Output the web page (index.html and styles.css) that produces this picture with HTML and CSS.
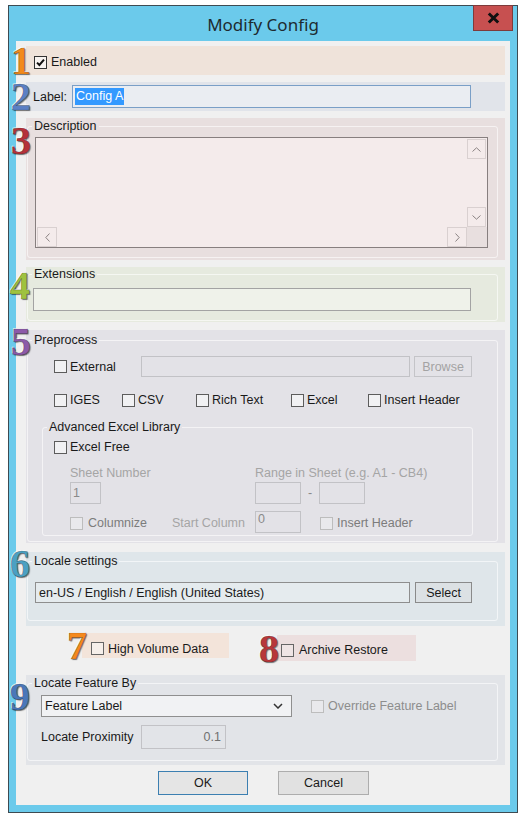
FILE: index.html
```html
<!DOCTYPE html>
<html lang="en">
<head>
    <meta charset="UTF-8">
    <meta name="viewport" content="width=device-width, initial-scale=1.0">
    <title>Modify Config</title>
    <link rel="stylesheet" href="styles.css">
</head>
<body>

<div class="window">

    <!-- Title Bar -->
    <div class="titlebar">
        <span class="title">Modify Config</span>
        <button class="close-btn">
            <svg width="13" height="12" viewBox="0 0 13 12"><path d="M1.8 1.5 L11.2 10.5 M11.2 1.5 L1.8 10.5" stroke="#111" stroke-width="3" fill="none"/></svg>
        </button>
    </div>

    <div class="client">

        <!-- 1: Enabled -->
        <div class="band band-enabled">
            <span class="num num-1">1</span>
            <label class="check">
                <span class="cb"><svg width="9" height="9" viewBox="0 0 9 9"><path d="M1 4.6 L3.4 7 L8 1.6" stroke="#111" stroke-width="2" fill="none"/></svg></span>
                Enabled
            </label>
        </div>

        <!-- 2: Label -->
        <div class="band band-label">
            <span class="num num-2">2</span>
            <span class="label-text">Label:</span>
            <div class="textbox textbox-focus"><span class="selected">Config A</span></div>
        </div>

        <!-- 3: Description -->
        <div class="band band-desc">
            <span class="num num-3">3</span>
            <fieldset class="group group-desc">
                <legend>Description</legend>
                <div class="memo">
                    <div class="memo-text"></div>
                    <div class="vscroll">
                        <span class="sb-btn"><svg width="9" height="5" viewBox="0 0 9 5"><path d="M0.5 4.5 L4.5 0.8 L8.5 4.5" stroke="#8a8282" fill="none"/></svg></span>
                        <span class="sb-track"></span>
                        <span class="sb-btn"><svg width="9" height="5" viewBox="0 0 9 5"><path d="M0.5 0.5 L4.5 4.2 L8.5 0.5" stroke="#8a8282" fill="none"/></svg></span>
                    </div>
                    <div class="hscroll">
                        <span class="sb-btn"><svg width="5" height="9" viewBox="0 0 5 9"><path d="M4.5 0.5 L0.8 4.5 L4.5 8.5" stroke="#8a8282" fill="none"/></svg></span>
                        <span class="sb-track"></span>
                        <span class="sb-btn"><svg width="5" height="9" viewBox="0 0 5 9"><path d="M0.5 0.5 L4.2 4.5 L0.5 8.5" stroke="#8a8282" fill="none"/></svg></span>
                    </div>
                    <div class="sb-corner"></div>
                </div>
            </fieldset>
        </div>

        <!-- 4: Extensions -->
        <div class="band band-ext">
            <span class="num num-4">4</span>
            <fieldset class="group group-ext">
                <legend>Extensions</legend>
                <div class="textbox ext-input"></div>
            </fieldset>
        </div>

        <!-- 5: Preprocess -->
        <div class="band band-pre">
            <span class="num num-5">5</span>
            <fieldset class="group group-pre">
                <legend>Preprocess</legend>

                <div class="row row-external">
                    <label class="check external-check"><span class="cb"></span>External</label>
                    <div class="textbox disabled-box external-path"></div>
                    <button class="btn btn-disabled browse-btn">Browse</button>
                </div>

                <div class="row row-types">
                    <label class="check"><span class="cb"></span>IGES</label>
                    <label class="check"><span class="cb"></span>CSV</label>
                    <label class="check"><span class="cb"></span>Rich Text</label>
                    <label class="check"><span class="cb"></span>Excel</label>
                    <label class="check"><span class="cb"></span>Insert Header</label>
                </div>

                <fieldset class="group group-excel">
                    <legend>Advanced Excel Library</legend>

                    <div class="row row-excel-free">
                        <label class="check"><span class="cb"></span>Excel Free</label>
                    </div>

                    <div class="row row-sheet-labels">
                        <span class="dim col-sheet">Sheet Number</span>
                        <span class="dim">Range in Sheet (e.g. A1 - CB4)</span>
                    </div>

                    <div class="row row-sheet-inputs">
                        <div class="col-sheet"><div class="textbox disabled-box small-input">1</div></div>
                        <div class="textbox disabled-box range-input"></div>
                        <span class="range-dash">-</span>
                        <div class="textbox disabled-box range-input"></div>
                    </div>

                    <div class="row row-columnize">
                        <label class="check check-disabled col-columnize"><span class="cb"></span>Columnize</label>
                        <span class="dim col-start">Start Column</span>
                        <div class="textbox disabled-box range-input">0</div>
                        <label class="check check-disabled insert-header-dim"><span class="cb"></span>Insert Header</label>
                    </div>
                </fieldset>
            </fieldset>
        </div>

        <!-- 6: Locale settings -->
        <div class="band band-locale">
            <span class="num num-6">6</span>
            <fieldset class="group group-locale">
                <legend>Locale settings</legend>
                <div class="row row-locale">
                    <div class="textbox locale-box">en-US / English / English (United States)</div>
                    <button class="btn select-btn">Select</button>
                </div>
            </fieldset>
        </div>

        <!-- 7 / 8: flags -->
        <div class="flags">
            <div class="flag flag-volume">
                <span class="num num-7">7</span>
                <label class="check"><span class="cb cb-light"></span>High Volume Data</label>
            </div>
            <div class="flag flag-archive">
                <span class="num num-8">8</span>
                <label class="check"><span class="cb cb-light"></span>Archive Restore</label>
            </div>
        </div>

        <!-- 9: Locate Feature By -->
        <div class="band band-locate">
            <span class="num num-9">9</span>
            <fieldset class="group group-locate">
                <legend>Locate Feature By</legend>
                <div class="row row-dropdown">
                    <div class="dropdown">
                        <span>Feature Label</span>
                        <svg width="10" height="6" viewBox="0 0 10 6"><path d="M1 1 L5 5 L9 1" stroke="#333" stroke-width="1.5" fill="none"/></svg>
                    </div>
                    <label class="check check-disabled override-check"><span class="cb"></span>Override Feature Label</label>
                </div>
                <div class="row row-proximity">
                    <span class="proximity-label">Locate Proximity</span>
                    <div class="textbox disabled-box proximity-input">0.1</div>
                </div>
            </fieldset>
        </div>

        <!-- Dialog buttons -->
        <div class="actions">
            <button class="btn dialog-btn default-btn">OK</button>
            <button class="btn dialog-btn">Cancel</button>
        </div>

    </div>
</div>

</body>
</html>
```

FILE: styles.css
```css
/* General Styles */
* {
    margin: 0;
    padding: 0;
    box-sizing: border-box;
}
body {
    background-color: #ffffff;
    font-family: "Liberation Sans", Arial, sans-serif;
    font-size: 12.5px;
    color: #1a1a1a;
}
button {
    font-family: inherit;
    font-size: inherit;
    color: inherit;
}

/* Window Frame */
.window {
    margin: 5px 0 0 8px;
    width: 510px;
    height: 808px;
    border: 1px solid #3e4b52;
    background-color: #6bcaeb;
    padding: 0 7px 7px;
    display: flex;
    flex-direction: column;
}
.titlebar {
    height: 35px;
    margin: 0 -7px;
    display: grid;
    grid-template-columns: 1fr auto 1fr;
    align-items: center;
}
.title {
    grid-column: 2;
    font-family: "Noto Sans", sans-serif;
    font-size: 17px;
    color: #1d2a30;
    padding-top: 2px;
}
.close-btn {
    grid-column: 3;
    justify-self: end;
    align-self: start;
    margin: -1px 4px 0 0;
    width: 40px;
    height: 26px;
    background-color: #c75050;
    border: 1px solid #7e3b3b;
    display: flex;
    align-items: center;
    justify-content: center;
}

/* Client Area */
.client {
    flex: 1;
    background-color: #f0f0f0;
    padding: 5px 5px 0 10px;
    display: flex;
    flex-direction: column;
}
.band {
    position: relative;
}

/* Numbered markers */
.num {
    position: absolute;
    font-family: "Liberation Serif", serif;
    font-weight: bold;
    font-size: 40px;
    line-height: 0.8;
    -webkit-text-stroke: 0.7px rgba(0, 0, 0, 0.35);
    text-shadow: -1px -1px 0 rgba(255, 255, 255, 0.7), 1px 1px 1px rgba(0, 0, 0, 0.5);
    z-index: 2;
}
.num-1 { top: -1px; left: -15px; color: #f28a1c; }
.num-2 { top: -1px; left: -15px; color: #5b80c4; }
.num-3 { top: 7px; left: -15px; color: #b5323a; }
.num-4 { top: 3px; left: -16px; color: #9fc23f; }
.num-5 { top: -4px; left: -15px; color: #8c5aa9; }
.num-6 { top: -4px; left: -16px; color: #4ba0c3; }
.num-7 { top: -3px; left: -15px; color: #f5891d; }
.num-8 { top: -2px; left: -18px; color: #b8373a; }
.num-9 { top: 6px; left: -16px; color: #4a77b9; }

/* Checkboxes */
.check {
    display: flex;
    align-items: center;
    gap: 3px;
    white-space: nowrap;
}
.cb {
    width: 13px;
    height: 13px;
    border: 1px solid #5c5c5c;
    background-color: #f1f1f3;
    display: flex;
    align-items: center;
    justify-content: center;
}
.cb-light {
    border-color: #666;
    background-color: #f6efea;
}
.check-disabled {
    color: #7c7c7c;
}
.check-disabled .cb {
    border-color: #bdbdbd;
    background-color: #e9e9ec;
}
.dim {
    color: #a5a5a5;
}

/* Text boxes */
.textbox {
    height: 23px;
    border: 1px solid #9a9a9a;
    background-color: #ffffff;
    display: flex;
    align-items: center;
    padding-left: 2px;
}
.disabled-box {
    border-color: #c2c2c6;
    background-color: #e3e2e7;
    color: #8a8a8a;
}

/* Buttons */
.btn {
    border: 1px solid #adadad;
    background-color: #e1e1e1;
    display: flex;
    align-items: center;
    justify-content: center;
}
.btn-disabled {
    border-color: #c4c4c8;
    background-color: #e3e2e7;
    color: #a3a3a3;
}

/* Group boxes */
.group {
    border: 1px solid rgba(255, 255, 255, 0.6);
    border-radius: 3px;
    margin-left: 1px;
    width: 471px;
    min-width: 0;
}
.group legend {
    margin-left: 4px;
    padding: 0 2px;
    line-height: 14px;
}
.row {
    display: flex;
    align-items: center;
}

/* 1 - Enabled */
.band-enabled {
    height: 29px;
    background-color: #efe3da;
    display: flex;
    align-items: center;
    padding: 3px 0 0 8px;
}
.band-enabled .check {
    gap: 4px;
}
.band-enabled .cb {
    border-color: #333;
    background-color: #f7f3f0;
}

/* 2 - Label */
.band-label {
    margin-top: 7px;
    height: 29px;
    background-color: #e1e4ea;
    display: flex;
    align-items: center;
    padding-left: 7px;
}
.label-text {
    width: 39px;
}
.textbox-focus {
    width: 399px;
    border-color: #7a9fc7;
    background-color: #eaedf2;
}
.selected {
    background-color: #3399ff;
    color: #ffffff;
    padding: 1px 1px;
    line-height: 15px;
}

/* 3 - Description */
.band-desc {
    margin-top: 7px;
    height: 142px;
    background-color: #e8dfdf;
    padding-top: 1px;
}
.group-desc {
    height: 139px;
}
.memo {
    margin: 4px 0 0 7px;
    width: 453px;
    height: 111px;
    border: 1px solid #877f7f;
    background-color: #f4ebeb;
    display: grid;
    grid-template-columns: 1fr 20px;
    grid-template-rows: 1fr 20px;
}
.vscroll {
    display: flex;
    flex-direction: column;
    padding-top: 1px;
}
.hscroll {
    display: flex;
    padding-left: 1px;
}
.sb-btn {
    width: 20px;
    height: 20px;
    border: 1px solid #d9d0d0;
    display: flex;
    align-items: center;
    justify-content: center;
}
.vscroll .sb-btn {
    width: 19px;
}
.sb-track {
    flex: 1;
}
.sb-corner {
    background-color: #e8dfdf;
}

/* 4 - Extensions */
.band-ext {
    margin-top: 7px;
    height: 55px;
    background-color: #e6eadf;
}
.group-ext {
    height: 54px;
}
.ext-input {
    margin: 7px 0 0 5px;
    width: 438px;
    background-color: #eff2ea;
    border-color: #a3a3a3;
}

/* 5 - Preprocess */
.band-pre {
    margin-top: 8px;
    height: 213px;
    background-color: #e3e2e7;
    padding-top: 3px;
}
.group-pre {
    height: 209px;
}
.row-external {
    margin-top: 9px;
    height: 21px;
    padding-left: 26px;
}
.external-check {
    width: 87px;
}
.external-path {
    width: 269px;
    height: 21px;
}
.browse-btn {
    margin-left: 4px;
    width: 58px;
    height: 21px;
}
.row-types {
    margin-top: 13px;
    height: 20px;
    padding-left: 26px;
    display: grid;
    grid-template-columns: 68px 74px 95px 77px auto;
}
.group-excel {
    margin: 10px 0 0 14px;
    width: 431px;
    height: 116px;
}
.row-excel-free {
    margin-top: 3px;
    height: 20px;
    padding-left: 11px;
}
.row-sheet-labels {
    margin-top: 9px;
    height: 14px;
    padding-left: 27px;
}
.col-sheet {
    width: 185px;
}
.row-sheet-inputs {
    margin-top: 2px;
    height: 22px;
    padding-left: 27px;
}
.small-input {
    width: 31px;
    height: 22px;
}
.range-input {
    width: 46px;
    height: 22px;
    align-items: flex-start;
}
.range-dash {
    width: 18px;
    text-align: center;
    color: #8a8a8a;
}
.row-columnize {
    margin-top: 7px;
    height: 22px;
    padding-left: 27px;
    align-items: flex-start;
}
.row-columnize .check,
.row-columnize .dim {
    margin-top: 5px;
}
.col-columnize {
    width: 102px;
    gap: 5px;
}
.col-start {
    width: 83px;
}
.insert-header-dim {
    margin-left: 19px;
    gap: 4px;
}

/* 6 - Locale */
.band-locale {
    margin-top: 9px;
    height: 74px;
    background-color: #dfe6ea;
    padding-top: 2px;
}
.group-locale {
    height: 67px;
}
.row-locale {
    margin: 14px 0 0 7px;
}
.locale-box {
    width: 375px;
    height: 21px;
    border-color: #8e8e8e;
    background-color: #e5ebee;
    padding-left: 3px;
}
.select-btn {
    margin-left: 5px;
    width: 57px;
    height: 21px;
    border-color: #8a8a8a;
    background-color: #dce1e4;
}

/* 7 / 8 - Flags */
.flags {
    margin-top: 7px;
    height: 28px;
    display: flex;
    align-items: flex-start;
    gap: 48px;
    padding-left: 56px;
}
.flag {
    position: relative;
    display: flex;
    align-items: center;
}
.flag-volume {
    width: 147px;
    height: 25px;
    background-color: #f3e4da;
    padding: 6px 0 0 9px;
}
.flag-volume .check {
    gap: 4px;
}
.flag-archive {
    margin-top: 2px;
    width: 139px;
    height: 26px;
    background-color: #ecdfdf;
    padding: 4px 0 0 4px;
}
.flag-archive .check {
    gap: 5px;
}
.flag-archive .cb-light {
    background-color: #efe5e5;
}

/* 9 - Locate Feature */
.band-locate {
    margin-top: 14px;
    height: 90px;
    background-color: #e2e4e8;
    padding-top: 1px;
}
.group-locate {
    height: 85px;
}
.row-dropdown {
    margin-top: 5px;
    padding-left: 13px;
}
.dropdown {
    width: 251px;
    height: 22px;
    border: 1px solid #8f8f8f;
    background-color: #f1f2f4;
    display: flex;
    align-items: center;
    justify-content: space-between;
    padding: 0 8px 0 3px;
}
.override-check {
    margin-left: 19px;
    gap: 4px;
    color: #8d8d8d;
}
.row-proximity {
    margin-top: 8px;
    padding-left: 13px;
}
.proximity-label {
    width: 100px;
}
.proximity-input {
    width: 85px;
    height: 24px;
    justify-content: flex-end;
    padding-right: 4px;
    background-color: #e2e4e8;
    color: #707070;
}

/* Dialog Buttons */
.actions {
    margin-top: 6px;
    display: flex;
    gap: 30px;
    padding-left: 132px;
}
.dialog-btn {
    width: 91px;
    height: 24px;
}
.default-btn {
    width: 90px;
    border-color: #3c7fb1;
    background-color: #e5e5e5;
}
```
